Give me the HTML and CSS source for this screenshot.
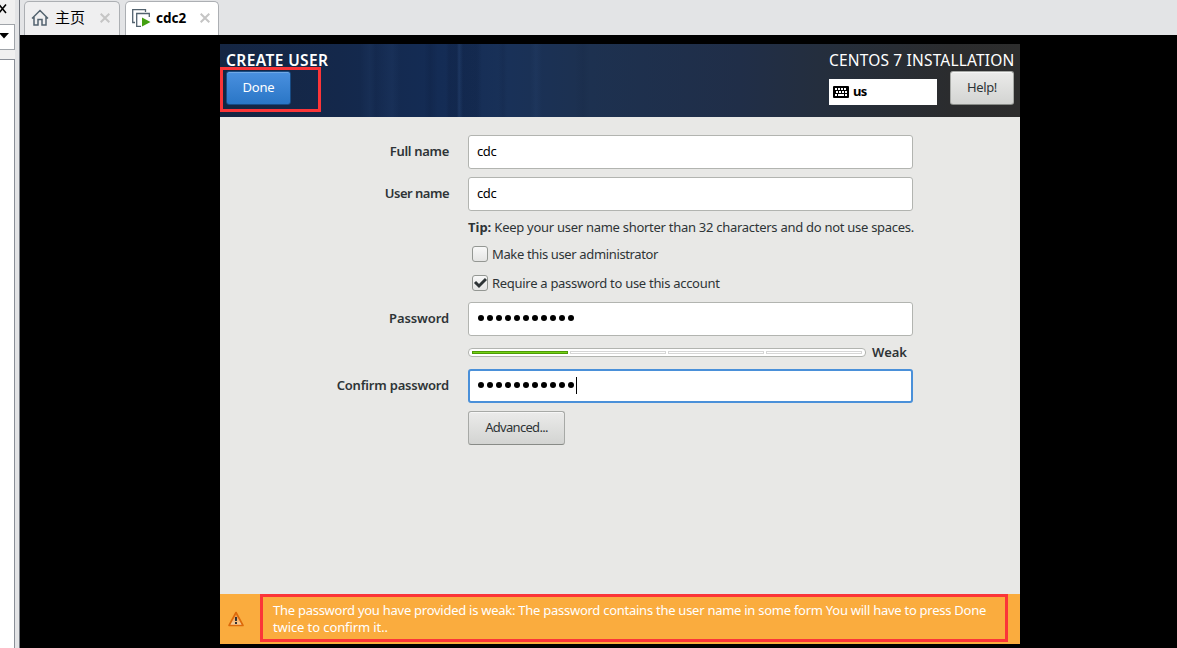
FILE: index.html
```html
<!DOCTYPE html>
<html lang="en">
<head>
<meta charset="utf-8">
<title>Create user</title>
<link rel="stylesheet" href="styles.css">
</head>
<body>
<div class="app">
  <aside class="side">
    <svg class="side-close" width="8" height="24" viewBox="0 0 8 24"><path d="M-1 4.500L6 13M6 4.500L-1 13" stroke="#000" stroke-width="1.500"/></svg>
    <div class="side-combo"><svg width="14" height="24" viewBox="0 0 14 24"><path d="M-1 8H9L4 13.500Z" fill="#000"/></svg></div>
    <div class="side-list"></div>
  </aside>
  <main class="main">
    <nav class="tabs">
      <div class="tab tab-home">
        <svg width="18" height="18" viewBox="0 0 18 18" fill="none" stroke="#53636f" stroke-width="1.500"><path d="M1 9.500L9 1.500L17 9.500M3 8V16H7V10.500H11V16H15V8"/></svg>
        <span class="tab-label cjk">主页</span>
        <svg class="x" width="10" height="10" viewBox="0 0 10 10"><path d="M.7.7L9.300 9.300M9.300.7L.7 9.300"/></svg>
      </div>
      <div class="tab tab-active">
        <svg width="19" height="18" viewBox="0 0 19 18" fill="none" stroke="#53636f" stroke-width="1.300"><path d="M3 13.500H.7V.7H13.500V3"/><path d="M17.300 8V4.500H4.700V17.300H9"/><path d="M10 8.500L18.500 13L10 17.500Z" fill="#43a010" stroke="none"/></svg>
        <span class="tab-label bold">cdc2</span>
        <svg class="x" width="10" height="10" viewBox="0 0 10 10"><path d="M.7.7L9.300 9.300M9.300.7L.7 9.300"/></svg>
      </div>
    </nav>
    <section class="installer">
      <header class="head">
        <div class="head-left">
          <h1 class="title">CREATE USER</h1>
          <button class="btn btn-done">Done</button>
        </div>
        <div class="head-right">
          <div class="product">CENTOS 7 INSTALLATION</div>
          <div class="head-tools">
            <div class="keyboard">
              <svg width="16" height="12" viewBox="0 0 16 12"><rect width="16" height="12" rx="1" fill="#000"/><path d="M2 3H14M3 6H14M2 9H4M12 9H14" stroke="#fff" stroke-width="2" stroke-dasharray="2 1"/><path d="M5 9H11" stroke="#fff" stroke-width="2"/></svg>
              <b>us</b>
            </div>
            <button class="btn btn-help">Help!</button>
          </div>
        </div>
        <div class="mark mark-done"></div>
      </header>
      <form class="form">
        <label class="label l-full">Full name</label><div class="field">cdc</div>
        <label class="label l-user">User name</label><div class="field">cdc</div>
        <div class="opts">
          <p class="tip"><b>Tip:</b> Keep your user name shorter than 32 characters and do not use spaces.</p>
          <div class="check"><span class="box"></span><span class="t-admin">Make this user administrator</span></div>
          <div class="check"><span class="box"><svg width="14" height="14" viewBox="0 0 14 14"><path d="M2 6L6 10L13 3" stroke="#2e3436" stroke-width="3" fill="none"/></svg></span><span class="t-req">Require a password to use this account</span></div>
        </div>
        <label class="label l-pass">Password</label>
        <div class="field"><span class="dots"><i></i><i></i><i></i><i></i><i></i><i></i><i></i><i></i><i></i><i></i><i></i></span></div>
        <div class="strength"><div class="meter"><i class="on"></i><i></i><i></i><i></i></div><b>Weak</b></div>
        <label class="label l-confirm">Confirm password</label>
        <div class="field focus"><span class="dots"><i></i><i></i><i></i><i></i><i></i><i></i><i></i><i></i><i></i><i></i><i></i></span><span class="caret"></span></div>
        <div class="adv"><button type="button" class="btn btn-adv">Advanced...</button></div>
      </form>
      <footer class="foot">
        <svg class="warn" width="16" height="16" viewBox="0 0 16 16"><defs><linearGradient id="w" x2="0" y2="1"><stop stop-color="#f08a2c"/><stop offset="1" stop-color="#f9d3a0"/></linearGradient></defs><path d="M8 1.500L15 14.500H1Z" fill="url(#w)" stroke="#dc6a0a" stroke-width="1.600" stroke-linejoin="round"/><path d="M8 6V10M8 11V13" stroke="#333" stroke-width="2"/></svg>
        <div class="message"><span class="m1">The password you have provided is weak: The password contains the user name in some form You will have to press Done</span><br><span class="m2">twice to confirm it..</span></div>
      </footer>
    </section>
  </main>
</div>
</body>
</html>
```
FILE: styles.css
```css
* { box-sizing: border-box; }
body { margin: 0; overflow: hidden; background: #000; color: #2e3436; font: 13px/17px "Noto Sans", sans-serif; }
svg { display: block; flex: none; }
p, h1 { margin: 0; }
.app { display: flex; width: 1177px; height: 648px; }
.side { width: 20px; flex: none; background: #f0f0f0; border-right: 1px solid #71767e; box-shadow: inset -4px 0 #e3e4e6; }
.side-combo { width: 15px; height: 26px; border: 1px solid #a0a4a9; border-left: 0; background: #fff; }
.side-list { width: 15px; height: 589px; margin-top: 9px; border: solid #8a8f97; border-width: 1px 1px 0 0; background: #fff; }
.main { flex: 1; display: flex; flex-direction: column; }
.tabs { height: 35px; background: #e3e4e6; padding: 1px 0 0 4px; display: flex; gap: 5px; }
.tab { height: 34px; display: flex; align-items: center; padding-bottom: 2px; border: 1px solid #acafb3; border-bottom: 0; border-radius: 5px 5px 0 0; color: #000; }
.tab-home { width: 96px; padding-left: 6px; background: #efeff0; }
.tab-active { width: 94px; padding-left: 6px; background: #fff; }
.cjk { font: 15px/20px "Noto Sans CJK SC", sans-serif; width: 30px; margin: -2px 0 0 6px; }
.bold { font-size: 13.500px; font-weight: 700; width: 31px; margin: 2px 0 0 5px; }
.x { stroke: #c5c5c5; stroke-width: 2; margin-left: 15px; }
.tab-active .x { margin-left: 13px; }
.installer { width: 800px; height: 600px; margin: 9px 0 0 200px; background: #e8e8e6; display: flex; flex-direction: column; }
.head { height: 73px; position: relative; display: flex; justify-content: space-between; padding: 6px 6px 0; color: #fff;
  background: linear-gradient(90deg, transparent 140px, rgba(90,140,210,.05) 150px, transparent 156px, rgba(90,140,210,.06) 172px, transparent 180px 204px, rgba(0,5,25,.1) 210px, transparent 218px 226px, rgba(0,5,25,.12) 229px 237px, rgba(110,155,220,.08) 239px, rgba(0,5,25,.12) 243px 257px, transparent 262px 278px, rgba(0,5,25,.07) 283px, transparent 287px 310px, rgba(90,140,210,.05) 316px, transparent 322px 355px, rgba(0,5,25,.06) 363px, transparent 370px),
  linear-gradient(90deg, #152643 0, #14284b 120px, #142c55 220px, #193158 290px, #1d3150 370px, #202e48 520px, #252e3b 620px, #2b2c2e 730px, #2d2d2d 800px); }
.title, .product { font-size: 16px; line-height: 21px; white-space: nowrap; }
.title { font-size: 15.500px; font-weight: 600; letter-spacing: .4px; }
.product { font-size: 15.500px; letter-spacing: .17px; }
.btn { display: block; height: 34px; padding: 0 0 2px; border: 1px solid #a7a9a6; border-bottom-color: #888b87; border-radius: 3px; background: linear-gradient(#ebebea, #d3d4d2); color: #2e3436; font: 13px/17px "Noto Sans", sans-serif; box-shadow: inset 0 1px #f6f6f6; }
.btn-done { width: 65px; letter-spacing: -.2px; border-color: #184b83; background: linear-gradient(#4a90df, #2a76c6); color: #fff; box-shadow: inset 0 1px #70a8e5; }
.btn-help { width: 64px; letter-spacing: -.4px; }
.btn-adv { width: 97px; letter-spacing: -.7px; }
.head-right { width: 185px; }
.head-tools { display: flex; justify-content: space-between; align-items: flex-end; }
.keyboard { width: 108px; height: 26px; background: #fff; color: #000; display: flex; align-items: center; gap: 4px; padding-left: 4px; }
.keyboard b { letter-spacing: -.8px; margin-top: -2px; }
.mark { position: absolute; border: 3px solid #fb3538; }
.mark-done { left: 0; top: 23px; width: 101px; height: 45px; }
.form { flex: 1; padding: 18px 107px 0 0; display: grid; grid-template-columns: 229px 445px; column-gap: 19px; row-gap: 8px; align-content: start; align-items: center; }
.label { font-weight: 600; text-align: right; white-space: nowrap; padding-bottom: 2px; letter-spacing: -.2px; }
.l-full { letter-spacing: -.3px; }
.l-user { letter-spacing: -.5px; }
.l-pass { letter-spacing: -.1px; }
.field { height: 34px; padding: 0 8px 2px; display: flex; align-items: center; background: #fff; border: 1px solid #b2b4b0; border-radius: 3px; color: #000; letter-spacing: -.4px; }
.focus { border: 2px solid #4a90d9; padding-left: 7px; }
.opts, .strength, .adv { grid-column: 2; }
.opts { height: 75px; }
.tip { white-space: nowrap; height: 21px; letter-spacing: -.277px; }
.tip b { letter-spacing: 0; }
.check { display: flex; align-items: center; gap: 4px; height: 29px; padding: 0 0 1px 4px; white-space: nowrap; }
.t-admin { letter-spacing: -.36px; }
.t-req { letter-spacing: -.29px; }
.box { width: 16px; height: 16px; border: 1px solid #949793; border-radius: 3px; background: linear-gradient(#f8f8f8, #e5e5e4); }
.dots { display: flex; gap: 3px; padding-left: 1px; }
.dots i { width: 6px; height: 6px; background: #000; border-radius: 50%; }
.caret { width: 1px; height: 17px; background: #000; margin-left: 2px; }
.strength { height: 17px; display: flex; align-items: center; gap: 6px; }
.strength b { font-weight: 600; }
.meter { width: 398px; height: 9px; flex: none; padding: 2px 3px; border: 1px solid #b2b4b0; border-radius: 4px; background: #fff; display: flex; gap: 2px; }
.meter i { flex: 1; height: 3px; border: 1px solid #d6d6d6; }
.meter .on { border-color: #4e9a06; background: #73d216; }
.foot { height: 50px; background: #faac3e; display: flex; align-items: center; padding-left: 8px; color: #fff; }
.message { width: 748px; height: 48px; margin: -2px 0 0 16px; padding: 5px 10px; border: 3px solid #fb3538; white-space: nowrap; }
.m1 { letter-spacing: -.262px; }
.m2 { letter-spacing: -.1px; }
```
